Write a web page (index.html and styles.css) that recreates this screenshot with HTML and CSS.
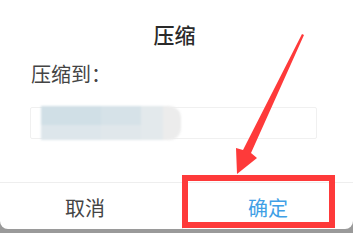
FILE: index.html
```html
<!DOCTYPE html>
<html lang="zh-CN">
<head>
  <meta charset="UTF-8">
  <title>压缩</title>
  <link rel="stylesheet" href="styles.css">
</head>
<body>
  <div class="dialog">
    <h3 class="title">压缩</h3>
    <div class="label">压缩到：</div>
    <div class="field">
      <div class="blur">
        <span class="b1"></span><span class="b2"></span><span class="b3"></span><span class="b4"></span>
      </div>
    </div>
    <div class="actions">
      <button class="btn cancel">取消</button>
      <button class="btn ok">确定</button>
    </div>
  </div>

  <!-- annotation overlay -->
  <div class="mark"></div>
  <svg class="arrow" width="353" height="233" viewBox="0 0 353 233">
    <polygon points="302,34 304,35 251,153 257,158 237,174 236,148 243,150" fill="#fe3a3a"/>
  </svg>
</body>
</html>
```

FILE: styles.css
```css
* {
  margin: 0;
  padding: 0;
  box-sizing: border-box;
}

body {
  width: 353px;
  height: 233px;
  overflow: hidden;
  background: #9a9a9a;
  font-family: "Noto Sans CJK SC", "Noto Sans", sans-serif;
  position: relative;
}

.dialog {
  background: #fff;
  height: 229px;
  border-radius: 0 0 8px 8px;
  display: flex;
  flex-direction: column;
}

.title {
  text-align: center;
  font-size: 21px;
  font-weight: 500;
  color: #2a2a2a;
  padding: 20px 4px 0 0;
  line-height: 28px;
}

.label {
  font-size: 20px;
  color: #444;
  padding: 13px 0 0 31px;
  line-height: 26px;
}

.field {
  margin: 20px 36px 0 30px;
  height: 32px;
  border: 1px solid #f0f0f0;
  border-radius: 2px;
  position: relative;
}

.blur {
  display: flex;
  height: 34px;
  margin: -2px 0 0 10px;
  filter: blur(1px);
}

.blur span {
  display: block;
  height: 100%;
}

.b1 {
  width: 60px;
  background: linear-gradient(#d0dfe6 55%, #dde6eb 55%);
}

.b2 {
  width: 40px;
  background: linear-gradient(#d6e2e8 55%, #e0e7eb 55%);
}

.b3 {
  width: 22px;
  background: #e3e9ec;
}

.b4 {
  width: 18px;
  background: #ececec;
  border-radius: 0 12px 12px 0;
}

.actions {
  margin-top: auto;
  display: flex;
  border-top: 1px solid #eeeeee;
  height: 47px;
}

.btn {
  flex: 1;
  border: none;
  background: none;
  font-family: inherit;
  font-size: 20px;
  color: #444;
  padding-top: 2px;
}

.btn.cancel {
  padding-right: 12px;
}

.btn + .btn {
  border-left: 1px solid #eeeeee;
}

.btn.ok {
  color: #3f9fe6;
}

.mark {
  position: absolute;
  left: 182px;
  top: 175px;
  width: 153px;
  height: 53px;
  border: 6px solid #fe3a3a;
}

.arrow {
  position: absolute;
  left: 0;
  top: 0;
}
```
